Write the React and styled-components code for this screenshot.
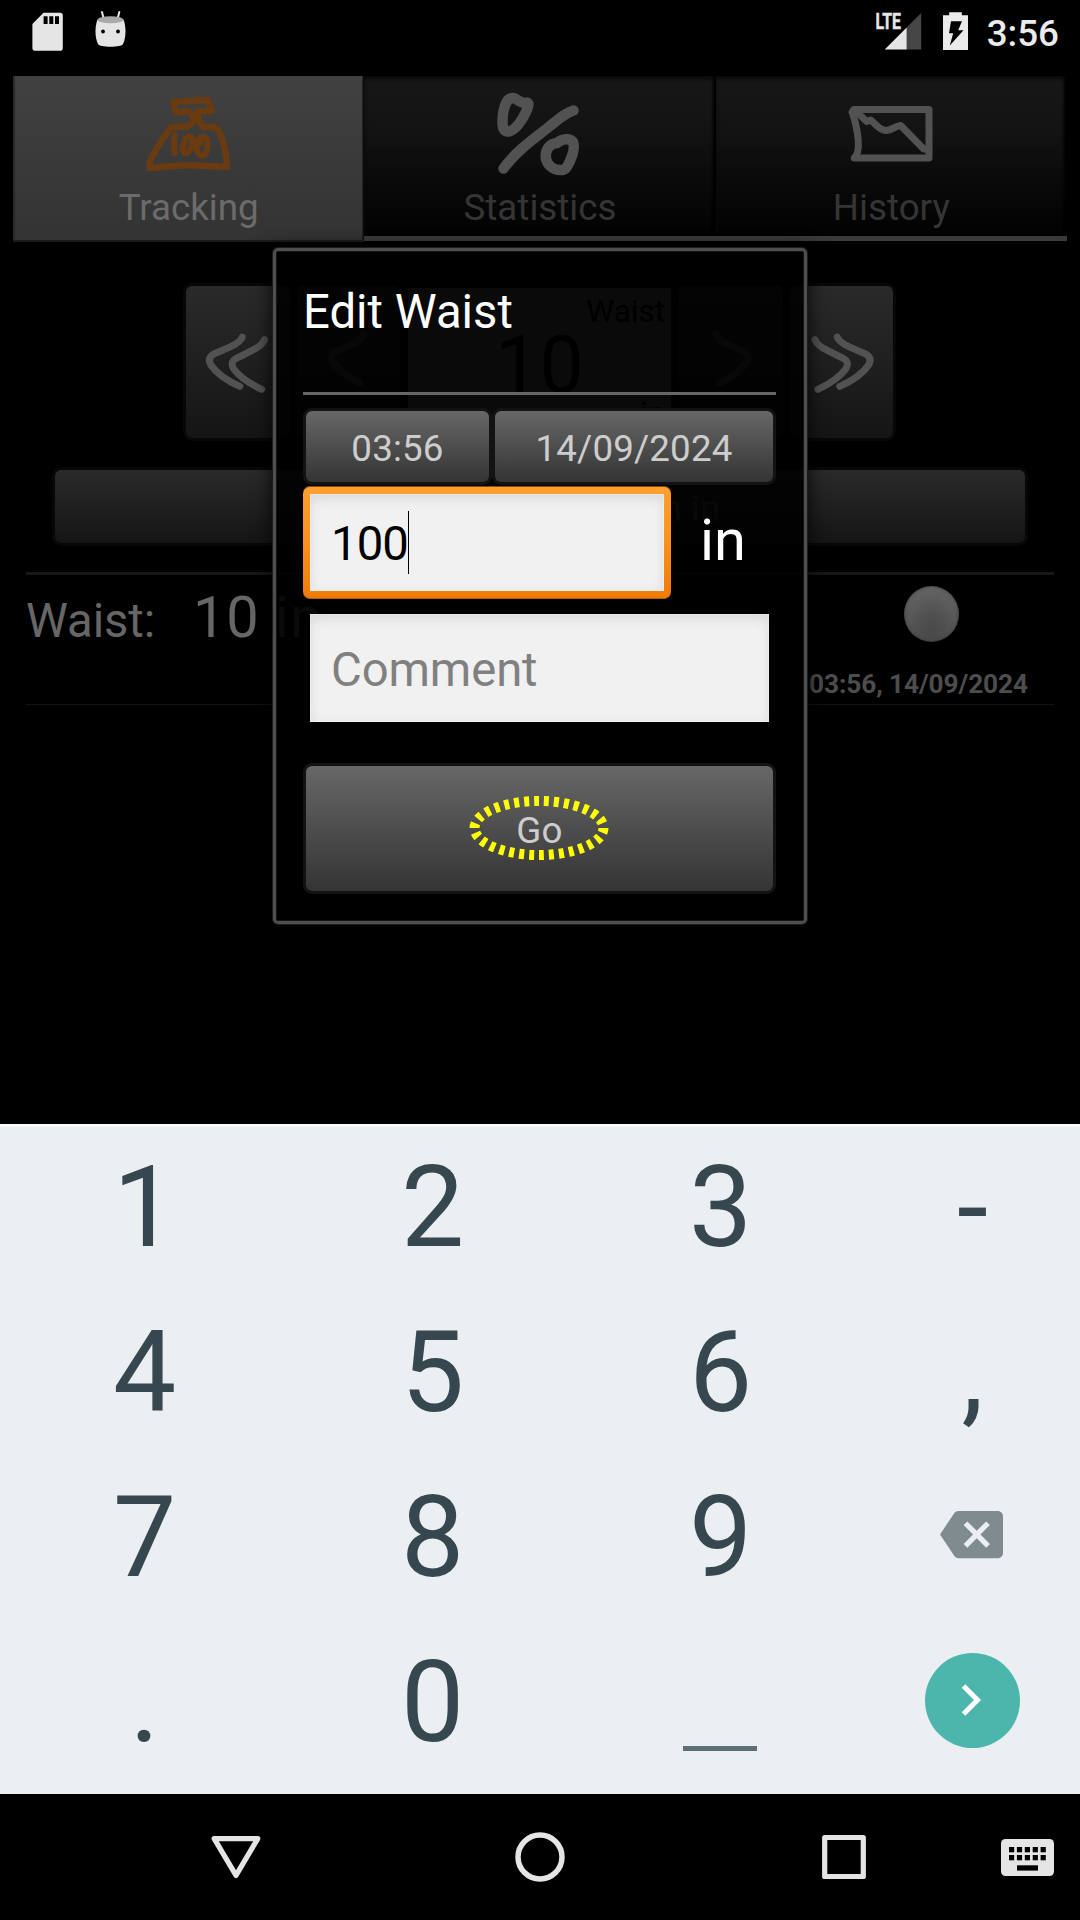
import React from "react";
import styled, { createGlobalStyle } from "styled-components";

const GlobalStyle = createGlobalStyle`
  * { box-sizing: border-box; }
  html, body { margin: 0; padding: 0; background: #000; }
  body { font-family: Roboto, "Liberation Sans", sans-serif; }
  svg { display: block; }
`;

const Screen = styled.div`
  position: relative;
  width: 1080px;
  height: 1920px;
  background: #000;
  overflow: hidden;
  display: flex;
  flex-direction: column;
`;

/* ---------- status bar ---------- */
const StatusBar = styled.header`
  height: 76px;
  display: flex;
  justify-content: space-between;
  padding: 0 21px 0 32px;
  color: #e5e5e5;
`;
const StatusGroup = styled.div`
  display: flex;
  gap: ${(p) => p.$gap}px;
`;
const Clock = styled.span`
  margin-left: -2px;
  font-size: 36.75px;
  font-weight: 500;
  line-height: 68px;
  color: #ebebeb;
`;

/* ---------- tabs ---------- */
const TabBar = styled.nav`
  display: grid;
  grid-template-columns: repeat(3, 1fr);
  height: 166px;
  margin: 0 13px;
`;
const Tab = styled.div`
  display: flex;
  flex-direction: column;
  align-items: center;
  padding-top: 10px;
  border-bottom: ${(p) => (p.$active ? "2px solid #1c1c1c" : "5px solid #3a3a3a")};
  margin-bottom: ${(p) => (p.$active ? 0 : 1)}px;
  box-shadow: ${(p) =>
    p.$active
      ? "inset 2px 0 1px #2a2a2a, inset -1.5px 0 0 #0c0c0c"
      : "inset -4px 0 3px -1px #000, inset 0 3px 4px #0a0a0a"};
  background: ${(p) =>
    p.$active
      ? "linear-gradient(#414141, #333333)"
      : "linear-gradient(#171717, #131313 35%, #0a0a0a 65%, #020202)"};
  color: ${(p) => (p.$active ? "#6b6b6b" : "#353535")};
`;
const TabLabel = styled.span`
  margin-top: 10px;
  font-size: 36.75px;
  line-height: 44px;
`;

/* ---------- page behind the dialog ---------- */
const Page = styled.main`
  height: 882px;
  padding-top: 44px;
`;
const Stepper = styled.div`
  display: flex;
  justify-content: center;
  gap: 7px;
  height: 152px;
  padding-right: 1px;
`;
const DimButton = styled.div`
  width: ${(p) => p.$width};
  height: ${(p) => p.$height}px;
  border-radius: 6px;
  background: linear-gradient(#2a2a2a, #151515);
  box-shadow: 0 0 0 3px #070707;
  display: flex;
  align-items: center;
  justify-content: center;
`;
const ValueField = styled.div`
  width: 263px;
  height: 152px;
  margin: 2px 1px 0;
  background: #666;
  color: #000;
  display: flex;
  flex-direction: column;
  padding: 5px 6px 0;
`;
const FieldNote = styled.span`
  text-align: right;
  font-size: 31.5px;
  line-height: 38px;
`;
const FieldNumber = styled.span`
  text-align: center;
  font-size: 78.75px;
  line-height: 68px;
  margin-bottom: -4px;
`;
const ButtonRow = styled.div`
  margin: 32px 55px 0;
`;
const WideLabel = styled.span`
  padding-left: 293px;
  font-size: 36.75px;
  line-height: 40px;
  padding-top: 4px;
  color: #525252;
`;
const Records = styled.section`
  margin: 29px 26px 0;
  border-top: 3px solid #171717;
`;
const Record = styled.div`
  height: 130px;
  display: flex;
  justify-content: space-between;
  border-bottom: 1px solid #121212;
  color: #666;
  padding: 2px 26px 0 0;
`;
const RecordValue = styled.div`
  display: flex;
  align-items: baseline;
  line-height: 80px;
`;
const RecordName = styled.span`
  width: 165px;
  font-size: 47.25px;
  letter-spacing: -0.1px;
  line-height: 80px;
`;
const RecordNumber = styled.span`
  font-size: 57.75px;
  letter-spacing: 0.9px;
  line-height: 80px;
  padding-left: 2px;
`;
const RecordMeta = styled.div`
  display: flex;
  flex-direction: column;
  align-items: flex-end;
`;
const Dot = styled.div`
  width: 55px;
  height: 56px;
  margin: 9px 69px 0 0;
  border-radius: 50%;
  background: radial-gradient(ellipse at 50% 85%, #494949 0%, rgba(77, 77, 77, 0) 60%),
    linear-gradient(#636363, #4f4f4f);
  box-shadow: inset 0 0 3px #333;
`;
const RecordTime = styled.span`
  margin-top: 27px;
  font-size: 26.25px;
  font-weight: 700;
  letter-spacing: -0.1px;
  line-height: 30px;
  color: #4d4d4d;
`;

/* ---------- dialog ---------- */
const Dialog = styled.section`
  position: absolute;
  left: 273px;
  top: 248px;
  width: 534px;
  height: 676px;
  padding: 30px 28px 0 27px;
  border: 3px solid #4e4e4e;
  border-radius: 5px;
  background: rgba(0, 0, 0, 0.9);
  box-shadow: 0 0 0 1px #1c1c1c, inset 0 0 0 1px #151515, 0 2px 18px 2px rgba(0, 0, 0, 0.75);
`;
const DialogTitle = styled.h1`
  margin: 0;
  padding: 1px 0 50px;
  border-bottom: 3px solid #666;
  font-size: 47.25px;
  font-weight: 400;
  line-height: 60px;
  color: #fff;
`;
const PickerRow = styled.div`
  display: flex;
  gap: 6px;
  margin: 16px 3px 0;
`;
const Button = styled.button`
  position: relative;
  display: flex;
  align-items: center;
  justify-content: center;
  flex: ${(p) => p.$grow || "none"};
  width: ${(p) => p.$width || "auto"};
  height: ${(p) => p.$height}px;
  margin: ${(p) => p.$margin || 0};
  padding: 0;
  border: 0;
  border-radius: 6px;
  background: linear-gradient(#676767, #343434);
  box-shadow: 0 0 0 3px #131313;
  font: 400 36.75px/44px Roboto, "Liberation Sans", sans-serif;
  letter-spacing: 0.15px;
  color: #cdcdcd;
`;
const ButtonText = styled.span`
  padding-top: ${(p) => p.$drop}px;
`;
const ValueRow = styled.div`
  display: flex;
  align-items: stretch;
  margin-top: 4px;
  height: 113px;
`;
const FocusRing = styled.div`
  width: 368px;
  padding: 8px 7px;
  border-radius: 7px;
  background: linear-gradient(#ff9f2e, #fb9322 45%, #ef7a08);
  box-shadow: inset 0 1px 0 rgba(0, 0, 0, 0.5), inset 0 -1px 0 rgba(0, 0, 0, 0.25);
`;
const InputBox = styled.div`
  display: flex;
  align-items: center;
  height: ${(p) => p.$height}px;
  margin: ${(p) => p.$margin || 0};
  padding: ${(p) => p.$drop}px 0 0 21px;
  background: #f1f1f1;
  box-shadow: inset 0 6px 12px rgba(0, 0, 0, 0.07), inset 0 0 16px rgba(0, 0, 0, 0.03),
    inset 0 0 0 1px #fafafa;
  font-size: 47.25px;
  letter-spacing: ${(p) => p.$tracking}px;
  line-height: 60px;
  color: ${(p) => p.$color};
`;
const Caret = styled.i`
  width: 1px;
  height: 63px;
  margin-top: -2px;
  background: #000;
`;
const Unit = styled.span`
  padding-left: 29px;
  font-size: 57.75px;
  line-height: 109px;
  color: #fff;
`;
const Highlight = styled.svg`
  position: absolute;
  left: 161px;
  top: 28px;
`;

/* ---------- keypad ---------- */
const Keypad = styled.section`
  height: 670px;
  display: grid;
  grid-template-columns: 288px 288px 288px 216px;
  grid-auto-rows: 165px;
  background: linear-gradient(#fbfcfc 2px, #ebeff2 3px);
  color: #37474f;
`;
const Key = styled.div`
  display: flex;
  align-items: center;
  justify-content: center;
  font-size: 112.5px;
  line-height: 165px;
`;
const KeyGlyph = styled.span`
  padding: 1px 0 0 1px;
`;
const BackspaceIcon = styled.svg`
  margin: -4px 2px 0 0;
`;
const SpaceMark = styled.i`
  width: 74px;
  height: 5px;
  margin-top: 93px;
  background: #5f6f75;
`;
const EnterKey = styled.div`
  width: 95px;
  height: 95px;
  margin: -3px 0 0 0;
  border-radius: 50%;
  background: #4db6ac;
  display: flex;
  align-items: center;
  justify-content: center;
`;

const NavBar = styled.footer`
  height: 126px;
  display: grid;
  grid-template-columns: 168px 136px 168px 136px 168px 136px 63px 105px;
`;
const NavSlot = styled.div`
  grid-column: ${(p) => p.$column};
  display: flex;
  align-items: center;
  justify-content: center;
`;

const SdCard = () => (
  <svg width="31" height="76" viewBox="32 0 31 76">
    <path fill="#e5e5e5" d="M43.5 12.7H60a2.8 2.8 0 0 1 2.8 2.8v32.4a2.8 2.8 0 0 1-2.8 2.8H35.200a2.800 2.800 0 0 1-2.800-2.800V24z" />
    <path fill="#000" d="M43.600 16.300h4v7.800h-4zM49.300 16.300h4v7.800h-4zM55 16.300h4v7.800h-4z" />
  </svg>
);

const DroidHead = () => (
  <svg width="32" height="76" viewBox="95 0 32 76">
    <path stroke="#e5e5e5" strokeWidth="2" strokeLinecap="round" d="M102 12l1.600 6.500M119.300 12l-1.600 6.500" />
    <path fill="#e5e5e5" d="M97.600 19.500C95 25 94.500 37 98 44c1 2 6 2.700 12.500 2.700s11.500-.7 12.500-2.700c3.500-7 3-19 .4-24.500z" />
    <ellipse cx="110.500" cy="19.700" rx="12.900" ry="3.500" fill="#a9a9a9" />
    <circle cx="103" cy="31.500" r="1.900" fill="#000" />
    <circle cx="118" cy="31.500" r="1.900" fill="#000" />
  </svg>
);

const Signal = () => (
  <svg width="46" height="76" viewBox="876 0 46 76">
    <text x="875.500" y="29" fontSize="22.500" fontWeight="700" fill="#e5e5e5" stroke="#e5e5e5" strokeWidth="0.500" textLength="25.500" lengthAdjust="spacingAndGlyphs">LTE</text>
    <path fill="#464646" d="M906.700 27.500L921.200 13v36.500h-14.500z" />
    <path fill="#e5e5e5" d="M884.700 49.500l22-22v22z" />
  </svg>
);

const Battery = () => (
  <svg width="25" height="76" viewBox="943 0 25 76">
    <path fill="#ebebeb" d="M943 15.300h6.200v-3h12.600v3h6.200V50h-25z" />
    <path fill="#000" d="M951 21.300h11l-3.800 9h5.300L949.800 45.500l3.400-12.200H949z" />
  </svg>
);

const ScaleIcon = () => (
  <svg width="90" height="90" viewBox="143.700 86 90 90" fill="none" stroke="#6a3a10" strokeWidth="6.500" strokeLinejoin="round" strokeLinecap="round">
    <path d="M149.300 168C160 167.500 174 165.500 186.700 165.300S215 167 226.700 166.700C226.500 156 223 141 218.500 131C216.500 127 214 127 202.500 126.700C199.500 124 197.500 119 197.700 111H211.500L207.500 100L173.500 102L175.500 112.500L187 111.300C193 113 194.500 120 191.500 123C189 127 184 126.500 177 127L170.500 127.500C161 141 153 152 149.300 163z" />
    <path strokeWidth="6" d="M174.300 135Q173 144 174.500 153M190.500 136C183 137 180 150 185 153.500C190 153 194.500 141 190.500 136.500M200 137C194 144 196 155 201.500 156C208 155 209.500 139 204 137C201 137 199 140 199.500 144" />
  </svg>
);

const PercentIcon = () => (
  <svg width="90" height="90" viewBox="495 86 90 90" fill="none" stroke="#525252" strokeWidth="10.500" strokeLinejoin="round" strokeLinecap="round">
    <path d="M513 98C505 98 502.500 112 502.500 121C502.500 129 504 132 509 131.500C516 129.500 522 120 525.500 113C529 106 529 103 527 102.500C521 105 517 98 513 98z" />
    <path d="M503.500 168.500C516 151 535 138 550 126C560 118 567 112 573.500 110.500" />
    <path d="M557 143C549 143.500 544.500 151 546 159C548 166 554 170 560 170C566 170.500 567 167 570 161C573 154 575 146 573 142C570 138 562 138.500 557 143z" />
  </svg>
);

const ChartIcon = () => (
  <svg width="90" height="90" viewBox="846.300 86 90 90" fill="none" stroke="#525252" strokeWidth="7" strokeLinejoin="round" strokeLinecap="round">
    <path d="M852.500 112L854 109.500H929.300V158H854.500Q859.500 154 858.500 140Q857 125 852.500 112" />
    <path d="M855 110L867 121.500L871 120C876 124 879 130 886.500 130.500C893 130 894 126.500 901 125.500L924 149L928 149" />
  </svg>
);

const Chevrons = ({ double, flip }) => (
  <svg width="104" height="152" viewBox="186 286 104 152" fill="none" stroke="#525252" strokeWidth="7" strokeLinecap="round" strokeLinejoin="round" transform={flip ? "scale(-1 1)" : undefined}>
    {double ? (
      <>
        <path d="M242.500 337Q241 342 231 346.500L214 354Q207 358 211 365Q219 377 240 386.500" />
        <path d="M265 339.500Q262 346 253 350L237 358Q229.500 362 234 369Q242 380 262 389.500" />
      </>
    ) : (
      <path d="M253 333.500Q251 340 242 344L225 351.500Q217.500 355 222 362Q230 374 249.500 383.500" />
    )}
  </svg>
);

const Backspace = () => (
  <BackspaceIcon width="63" height="63" viewBox="0 0 24 24">
    <path fill="#808b8f" d="M22 3H7c-.69 0-1.230.35-1.590.88L0 12l5.410 8.110c.36.53.9.89 1.590.89h15c1.100 0 2-.9 2-2V5c0-1.100-.9-2-2-2zm-3 12.590L17.590 17 14 13.410 10.410 17 9 15.590 12.590 12 9 8.410 10.410 7 14 10.590 17.590 7 19 8.410 15.410 12 19 15.590z" />
  </BackspaceIcon>
);

const TABS = [
  { name: "Tracking", Icon: ScaleIcon, active: true },
  { name: "Statistics", Icon: PercentIcon },
  { name: "History", Icon: ChartIcon },
];

const KEYS = ["1", "2", "3", "-", "4", "5", "6", ",", "7", "8", "9", "back", ".", "0", "space", "enter"];

const KEY_FACES = {
  back: <Backspace />,
  space: <SpaceMark />,
  enter: (
    <EnterKey>
      <svg width="30" height="40" viewBox="-15 -20 30 40" fill="none" stroke="#fff" strokeWidth="5">
        <path d="M-8.500 -14L5.500 0L-8.500 14" />
      </svg>
    </EnterKey>
  ),
};

export default function App() {
  return (
    <Screen>
      <GlobalStyle />
      <StatusBar>
        <StatusGroup $gap={32}>
          <SdCard />
          <DroidHead />
        </StatusGroup>
        <StatusGroup $gap={21}>
          <Signal />
          <Battery />
          <Clock>3:56</Clock>
        </StatusGroup>
      </StatusBar>

      <TabBar>
        {TABS.map(({ name, Icon, active }) => (
          <Tab key={name} $active={active}>
            <Icon />
            <TabLabel>{name}</TabLabel>
          </Tab>
        ))}
      </TabBar>

      <Page>
        <Stepper>
          <DimButton $width="103.5px" $height={152}><Chevrons double /></DimButton>
          <DimButton $width="103.5px" $height={152}><Chevrons /></DimButton>
          <ValueField>
            <FieldNote>Waist</FieldNote>
            <FieldNumber>10</FieldNumber>
            <FieldNote>in</FieldNote>
          </ValueField>
          <DimButton $width="103.5px" $height={152}><Chevrons flip /></DimButton>
          <DimButton $width="103.5px" $height={152}><Chevrons double flip /></DimButton>
        </Stepper>
        <ButtonRow>
          <DimButton $width="100%" $height={73}><WideLabel>in in</WideLabel></DimButton>
        </ButtonRow>
        <Records>
          <Record>
            <RecordValue>
              <RecordName>Waist:</RecordName>
              <RecordNumber>10 in</RecordNumber>
            </RecordValue>
            <RecordMeta>
              <Dot />
              <RecordTime>03:56, 14/09/2024</RecordTime>
            </RecordMeta>
          </Record>
        </Records>
      </Page>

      <Keypad>
        {KEYS.map((key) => (
          <Key key={key}>{KEY_FACES[key] || <KeyGlyph>{key}</KeyGlyph>}</Key>
        ))}
      </Keypad>

      <NavBar>
        <NavSlot $column={2}>
          <svg width="52" height="48" viewBox="-26 -24 52 48" fill="none" stroke="#e5e5e5" strokeWidth="5.200" strokeLinejoin="round">
            <path d="M-21.800 -18.400H21.800L0 18.400z" />
          </svg>
        </NavSlot>
        <NavSlot $column={4}>
          <svg width="136" height="50" viewBox="-68 -25 136 50" fill="none" stroke="#e5e5e5" strokeWidth="5.500">
            <circle r="22" />
          </svg>
        </NavSlot>
        <NavSlot $column={6}>
          <svg width="46" height="46" viewBox="-23 -23 46 46" fill="none" stroke="#e5e5e5" strokeWidth="5.200" strokeLinejoin="round">
            <path d="M-19.300 -19.500H19.300V19.500H-19.300z" />
          </svg>
        </NavSlot>
        <NavSlot $column={8}>
          <svg width="53" height="37" viewBox="0 0 53 37">
            <rect width="53" height="37" rx="4.500" fill="#e5e5e5" />
            <g fill="#000">
              {[0, 1, 2, 3, 4].map((i) => (
                <React.Fragment key={i}>
                  <rect x={8 + i * 7.900} y="8" width="5.200" height="5.300" />
                  <rect x={8 + i * 7.900} y="16" width="5.200" height="5.300" />
                </React.Fragment>
              ))}
              <rect x="16" y="26.300" width="21" height="5.300" />
            </g>
          </svg>
        </NavSlot>
      </NavBar>

      <Dialog>
        <DialogTitle>Edit Waist</DialogTitle>
        <PickerRow>
          <Button $width="183px" $height={71}><ButtonText $drop={5}>03:56</ButtonText></Button>
          <Button $grow="1" $height={71}><ButtonText $drop={5}>14/09/2024</ButtonText></Button>
        </PickerRow>
        <ValueRow>
          <FocusRing>
            <InputBox $height={97} $drop={2} $tracking={-0.9} $color="#000">
              100
              <Caret />
            </InputBox>
          </FocusRing>
          <Unit>in</Unit>
        </ValueRow>
        <InputBox $height={108} $drop={3} $tracking={-0.1} $color="#808080" $margin="15px 7px 0">
          Comment
        </InputBox>
        <Button $height={125} $width="467px" $margin="44px 3px 0">
          <ButtonText $drop={4}>Go</ButtonText>
          <Highlight width="144" height="68" viewBox="-72 -34 144 68">
            <ellipse rx="64.500" ry="27" fill="none" stroke="#ff0" strokeWidth="10" pathLength="300" strokeDasharray="5 5" />
          </Highlight>
        </Button>
      </Dialog>
    </Screen>
  );
}
